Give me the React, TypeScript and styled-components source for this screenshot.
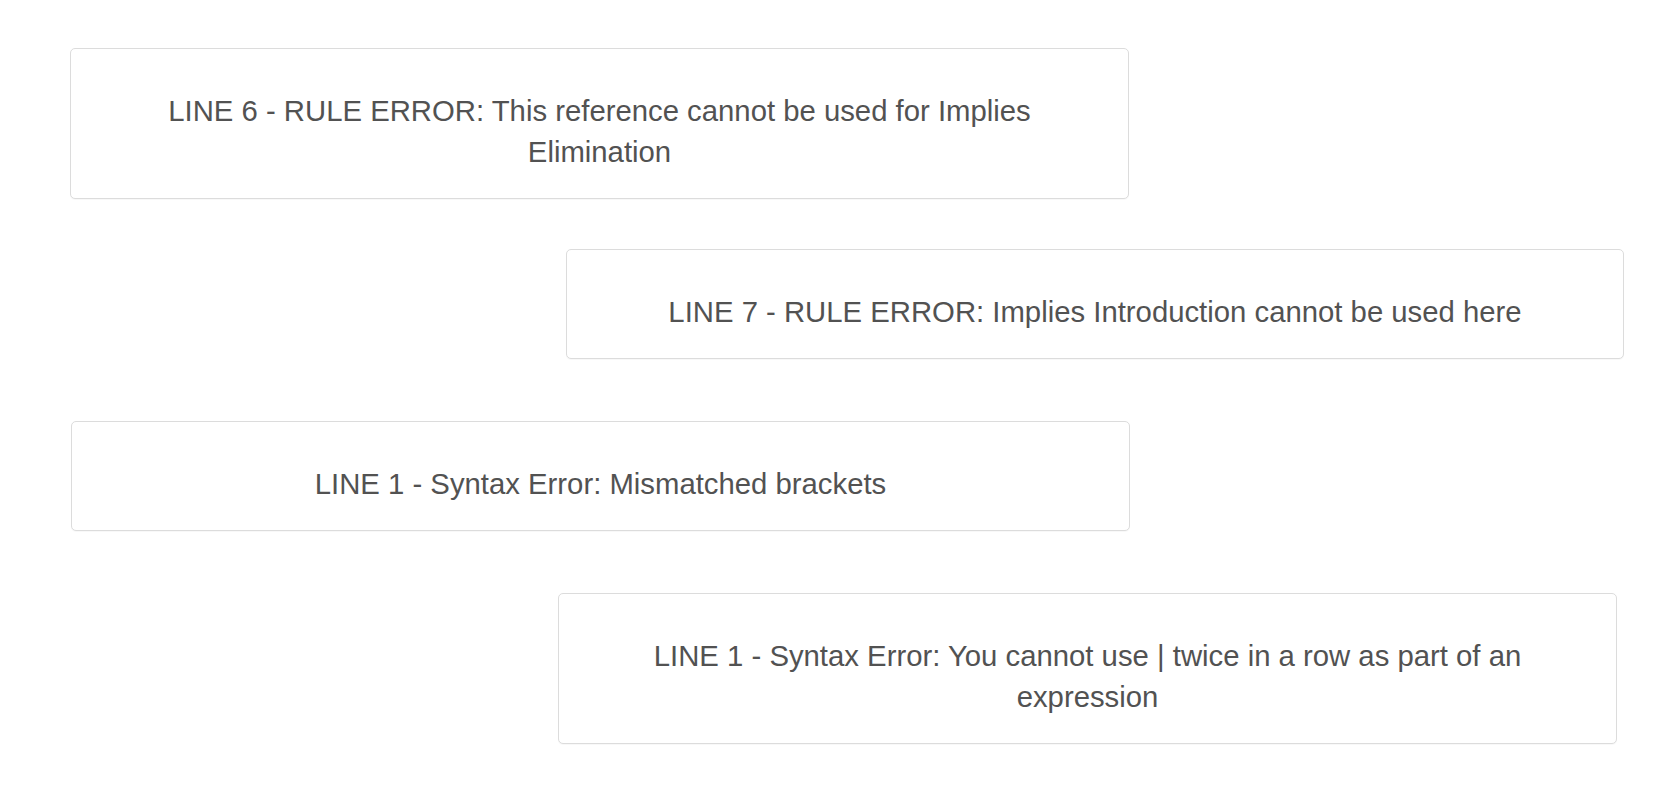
import React from "react";
import styled, { createGlobalStyle } from "styled-components";

const Global = createGlobalStyle`
  html, body {
    margin: 0;
    padding: 0;
    background: #ffffff;
  }
  body {
    font-family: "Liberation Sans", Arial, Helvetica, sans-serif;
  }
`;

const Feed = styled.div`
  display: flex;
  flex-direction: column;
  align-items: flex-start;
  width: 1672px;
  padding-bottom: 40px;
`;

const Card = styled.div<{ $left: number; $top: number; $width: number }>`
  box-sizing: border-box;
  margin-left: ${(p) => p.$left}px;
  margin-top: ${(p) => p.$top}px;
  width: ${(p) => p.$width}px;
  padding: 41px 34px 26px;
  background: #ffffff;
  border: 1px solid #dcdcdc;
  border-radius: 5px;
  box-shadow: 0 1px 1px rgba(0, 0, 0, 0.03);
  text-align: center;
  color: #525252;
  font-size: 29.3px;
  line-height: 41px;
`;

const messages = [
  { left: 70, top: 48, width: 1059, text: "LINE 6 - RULE ERROR: This reference cannot be used for Implies Elimination" },
  { left: 566, top: 50, width: 1058, text: "LINE 7 - RULE ERROR: Implies Introduction cannot be used here" },
  { left: 71, top: 62, width: 1059, text: "LINE 1 - Syntax Error: Mismatched brackets" },
  { left: 558, top: 62, width: 1059, text: "LINE 1 - Syntax Error: You cannot use | twice in a row as part of an expression" },
];

export default function App() {
  return (
    <>
      <Global />
      <Feed>
        {messages.map((m, i) => (
          <Card key={i} $left={m.left} $top={m.top} $width={m.width}>
            {m.text}
          </Card>
        ))}
      </Feed>
    </>
  );
}
